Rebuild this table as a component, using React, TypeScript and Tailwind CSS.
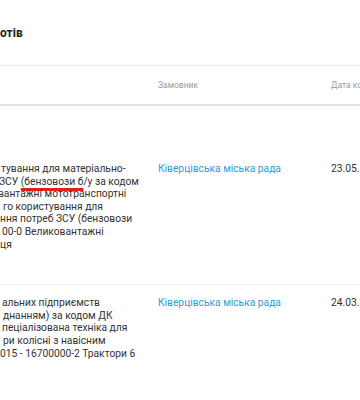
import React from "react";

type Row = {
  lines: { text: React.ReactNode; indent: string }[];
  buyer: string;
  date: string;
  pad: string;
};

const ROWS: Row[] = [
  {
    pad: "pt-[57px] pb-[33px]",
    lines: [
      { text: "тування для матеріально-", indent: "pl-[1px]" },
      {
        text: (
          <>
            ЗСУ{" "}
            <span className="underline decoration-[#e0201b] decoration-[2.5px] underline-offset-[3px]">
              (бензовози б
            </span>
            /у за кодом
          </>
        ),
        indent: "-ml-[1px]",
      },
      { text: "вантажні мототранспортні", indent: "-ml-[2px]" },
      { text: "го користування для", indent: "pl-[3px]" },
      { text: "ння потреб ЗСУ (бензовози", indent: "pl-0" },
      { text: "00-0 Великовантажні", indent: "pl-[2px]" },
      { text: "ця", indent: "pl-0" },
    ],
    buyer: "Ківерцівська міська рада",
    date: "23.05.2023",
  },
  {
    pad: "pt-[12px] pb-[50px]",
    lines: [
      { text: "альних підприємств", indent: "pl-[2px]" },
      { text: "днанням) за кодом ДК", indent: "pl-[3px]" },
      { text: "пеціалізована техніка для", indent: "pl-[2px]" },
      { text: "ри колісні з навісним", indent: "pl-[3px]" },
      { text: "015 - 16700000-2 Трактори 6", indent: "pl-0" },
    ],
    buyer: "Ківерцівська міська рада",
    date: "24.03.2023",
  },
];

export default function App() {
  return (
    <div className="w-[360px] h-[400px] overflow-hidden bg-white font-['Roboto',sans-serif] text-[#333]">
      {/* Title */}
      <div className="h-[66px] flex items-center border-b border-[#ececec]">
        <h2 className="text-[12px] font-bold text-[#222] whitespace-nowrap">отів</h2>
      </div>

      {/* Table head */}
      <div className="h-[40px] flex items-center border-b-2 border-[#e2e2e2] text-[8.5px] text-[#9a9a9a] whitespace-nowrap">
        <div className="w-[158px] shrink-0" />
        <div className="w-[173px] shrink-0">Замовник</div>
        <div className="shrink-0">Дата контракту</div>
      </div>

      {/* Rows */}
      {ROWS.map((row, i) => (
        <div
          key={i}
          className={`flex text-[10.25px] leading-[12.6px] border-b border-[#efefef] ${row.pad}`}
        >
          <div className="w-[158px] shrink-0 whitespace-nowrap">
            {row.lines.map((l, j) => (
              <div key={j} className={l.indent}>
                {l.text}
              </div>
            ))}
          </div>
          <div className="w-[173px] shrink-0 whitespace-nowrap text-[#2d9cdb]">{row.buyer}</div>
          <div className="shrink-0 whitespace-nowrap">{row.date}</div>
        </div>
      ))}
    </div>
  );
}
